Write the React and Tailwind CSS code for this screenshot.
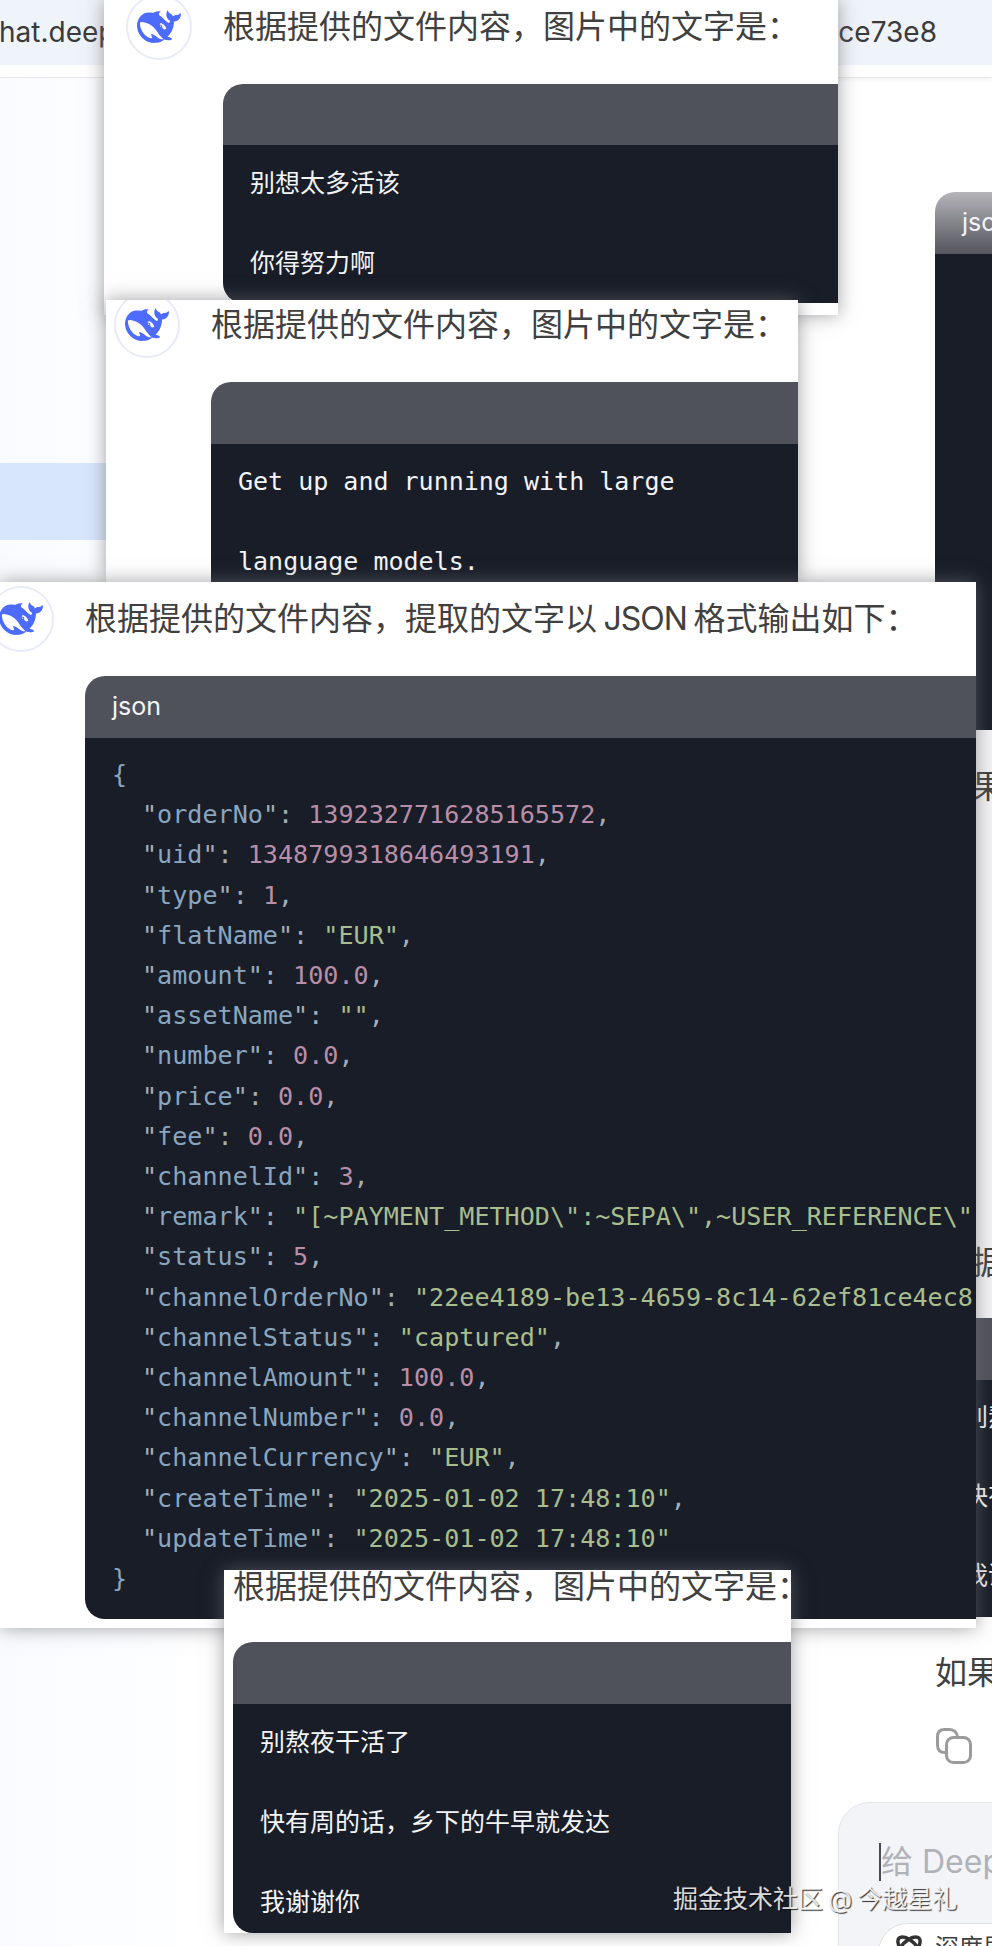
import React from 'react';

const sans = "font-['Inter','Noto_Sans_CJK_SC',sans-serif]";
const mono = "font-['DejaVu_Sans_Mono','Noto_Sans_CJK_SC',monospace]";

const whale =
  'M23.748 4.482c-.254-.124-.364.113-.512.234-.051.039-.094.09-.137.136-.372.397-.806.657-1.373.626-.829-.046-1.537.214-2.163.848-.133-.782-.575-1.248-1.247-1.548-.352-.156-.708-.311-.955-.65-.172-.241-.219-.51-.305-.774-.055-.16-.11-.323-.293-.35-.2-.031-.278.136-.356.276-.313.572-.434 1.202-.422 1.84.027 1.436.633 2.58 1.838 3.393.137.093.172.187.129.323-.082.28-.18.552-.266.833-.055.179-.137.217-.329.14a5.526 5.526 0 01-1.736-1.18c-.857-.828-1.631-1.742-2.597-2.458a11.365 11.365 0 00-.689-.471c-.985-.957.13-1.743.388-1.836.27-.098.093-.432-.779-.428-.872.004-1.67.295-2.687.684a3.055 3.055 0 01-.465.137 9.597 9.597 0 00-2.883-.102c-1.885.21-3.39 1.102-4.497 2.623C.082 8.606-.231 10.684.152 12.85c.403 2.284 1.569 4.175 3.36 5.653 1.858 1.533 3.997 2.284 6.438 2.14 1.482-.085 3.133-.284 4.994-1.86.47.234.962.327 1.78.397.63.059 1.236-.03 1.705-.128.735-.156.684-.837.419-.961-2.155-1.004-1.682-.595-2.113-.926 1.096-1.296 2.746-2.642 3.392-7.003.05-.347.007-.565 0-.845-.004-.17.035-.237.23-.256a4.173 4.173 0 001.545-.475c1.396-.763 1.96-2.015 2.093-3.517.02-.23-.004-.467-.247-.588zM11.581 18c-2.089-1.642-3.102-2.183-3.52-2.16-.392.024-.321.471-.235.763.09.288.207.486.371.739.114.167.192.416-.113.603-.673.416-1.842-.14-1.897-.167-1.361-.802-2.5-1.86-3.301-3.307-.774-1.393-1.224-2.887-1.298-4.482-.02-.386.093-.522.477-.592a4.696 4.696 0 011.529-.039c2.132.312 3.946 1.265 5.468 2.774.868.86 1.525 1.887 2.202 2.891.72 1.066 1.494 2.082 2.48 2.914.348.292.625.514.891.677-.802.09-2.14.11-3.054-.614zm1-6.44a.306.306 0 01.415-.287.302.302 0 01.2.288.306.306 0 01-.31.307.303.303 0 01-.305-.308zm3.11 1.596c-.2.081-.399.151-.59.16a1.245 1.245 0 01-.798-.254c-.274-.23-.47-.358-.552-.758a1.73 1.73 0 01.016-.588c.07-.327-.008-.537-.239-.727-.187-.156-.426-.199-.688-.199a.559.559 0 01-.254-.078c-.11-.054-.2-.19-.114-.358.028-.054.16-.186.192-.21.356-.202.767-.136 1.146.016.352.144.618.408 1.001.782.391.451.462.576.685.914.176.265.336.537.445.848.067.195-.019.354-.25.452z';

const jsonLines = [
  ['orderNo', '1392327716285165572,', 'n'],
  ['uid', '1348799318646493191,', 'n'],
  ['type', '1,', 'n'],
  ['flatName', '"EUR",', 's'],
  ['amount', '100.0,', 'n'],
  ['assetName', '"",', 's'],
  ['number', '0.0,', 'n'],
  ['price', '0.0,', 'n'],
  ['fee', '0.0,', 'n'],
  ['channelId', '3,', 'n'],
  ['remark', '"[~PAYMENT_METHOD\\":~SEPA\\",~USER_REFERENCE\\":~ABC\\"]",', 's'],
  ['status', '5,', 'n'],
  ['channelOrderNo', '"22ee4189-be13-4659-8c14-62ef81ce4ec8",', 's'],
  ['channelStatus', '"captured",', 's'],
  ['channelAmount', '100.0,', 'n'],
  ['channelNumber', '0.0,', 'n'],
  ['channelCurrency', '"EUR",', 's'],
  ['createTime', '"2025-01-02 17:48:10",', 's'],
  ['updateTime', '"2025-01-02 17:48:10"', 's'],
];

function Avatar() {
  return (
    <div className="w-[66px] h-[66px] shrink-0 rounded-full border-2 border-[#e8eafa] bg-white flex items-center justify-center">
      <svg viewBox="0 0 24 24" className="w-[44px] h-[44px]" fill="#4d6bfe">
        <path d={whale} />
      </svg>
    </div>
  );
}

function CodeBlock({ label, children, bodyClass, headerClass = 'h-[62px]' }) {
  return (
    <div className="rounded-l-[20px] overflow-hidden">
      <div className={`bg-[#50525b] flex items-center pl-[27px] text-[25px] text-[#f3f4f6] ${headerClass} ${sans}`}>{label}</div>
      <div className={`bg-[#181d28] ${bodyClass}`}>{children}</div>
    </div>
  );
}

function TextLines({ lines, font }) {
  return (
    <div className={`pt-[18px] pl-[27px] flex flex-col gap-[40px] text-[25px] leading-[40px] text-[#f3f4f6] whitespace-pre ${font}`}>
      {lines.map((l) => (
        <div key={l}>{l}</div>
      ))}
    </div>
  );
}

function JsonBody() {
  return (
    <div className={`pt-[17px] pl-[27px] pb-[20px] text-[25.1px] leading-[40.2px] whitespace-pre ${mono}`}>
      <div className="text-[#8aa6bf]">{'{'}</div>
      {jsonLines.map(([key, value, kind]) => (
        <div key={key} className="pl-[30px]">
          <span className="text-[#a3aeb8]">"</span>
          <span className="text-[#8aa6bf]">{key}</span>
          <span className="text-[#a3aeb8]">": </span>
          <span className={kind === 'n' ? 'text-[#b88ea8]' : 'text-[#a9bd8e]'}>{value.replace(/,$/, '')}</span>
          {value.endsWith(',') && <span className="text-[#a3aeb8]">,</span>}
        </div>
      ))}
      <div className="text-[#8aa6bf]">{'}'}</div>
    </div>
  );
}

function Heading({ children }) {
  return (
    <div className={`mt-[9px] h-[81px] text-[32px] leading-[48px] text-[#404040] whitespace-nowrap ${sans}`}>{children}</div>
  );
}

function Message({ text, children, offset }) {
  return (
    <div className={`flex items-start gap-[31px] ${offset}`}>
      <Avatar />
      <div className="flex-1 min-w-0">
        <Heading>{text}</Heading>
        {children}
      </div>
    </div>
  );
}

const cardShadow = 'shadow-[0_0_18px_rgba(110,110,115,0.65)]';

export default function App() {
  return (
    <div className={`relative w-[992px] h-[1946px] overflow-hidden bg-white ${sans}`}>
      {/* page behind the pasted screenshots */}
      <div className="h-[65px] bg-[#eff3fa] flex items-center justify-between pr-[55px] pb-[2px] text-[28px] text-[#3a3a3a]">
        <span className="-ml-[1px]">hat.deep</span>
        <span>ce73e8</span>
      </div>
      <div className="h-[13px] bg-white border-b border-[#e8e8e8] shadow-[0_2px_4px_rgba(0,0,0,0.05)]" />

      <div className="flex h-[1868px]">
        <aside className="w-[210px] bg-gradient-to-r from-[#f9fbff] to-white pt-[385px]">
          <div className="h-[77px] bg-[#d7e6fb]" />
        </aside>
        <div className="flex-1" />
        <div className="w-[154px] shrink-0 overflow-hidden">
          <div className="ml-[97px] pt-[114px] w-[200px]">
            <div className="rounded-tl-[20px] overflow-hidden">
              <div className="h-[62px] bg-gradient-to-b from-[#b5b5ba] to-[#55565d] pl-[27px] flex items-center text-[25px] text-[#f3f4f6]">json</div>
              <div className="h-[476px] bg-[#181d28]" />
            </div>
            <div className="h-[588px] pt-[33px] pl-[5px] bg-[#f4f4f6] text-[32px] leading-[48px] text-[#404040] whitespace-nowrap">
              <div>结果</div>
              <div className="mt-[428px]">数据</div>
            </div>
            <div className="h-[62px] bg-[#50525b]" />
            <div className="h-[237px] bg-[#181d28] pt-[17px] pl-[28px] text-[25px] leading-[40px] text-[#f3f4f6] whitespace-nowrap flex flex-col gap-[39px]">
              <div>别熬夜干活了</div>
              <div>快有周的话</div>
              <div>我谢谢你</div>
            </div>
            <div className="mt-[32px] text-[32px] leading-[48px] text-[#404040] whitespace-nowrap">如果</div>
            <svg viewBox="0 0 36 36" fill="none" stroke="#9b9b9b" strokeWidth="3" className="mt-[31px] ml-[1px] w-[36px] h-[36px]">
              <rect x="10.5" y="9.5" width="24" height="25" rx="7" />
              <path d="M9 24.5C4 24.5 1.5 22 1.5 17V8.5C1.5 4 4 1.5 8.5 1.5H13C17.5 1.5 20.5 4 21.5 8" />
            </svg>
          </div>
          <div className="mt-[38px] h-[200px] w-[260px] rounded-tl-[32px] border border-[#e3e5e9] bg-[#f3f4f8] pt-[40px] pl-[40px]">
            <div className="h-[38px] border-l-2 border-[#4a4a52] text-[32px] leading-[38px] text-[#b0b2b8] whitespace-nowrap">给 Deep</div>
            <div className="mt-[42px] -ml-[1px] h-[60px] w-[170px] rounded-[30px] border border-[#e0e1e5] bg-white flex items-start gap-[10px] pl-[14px] pt-[8px]">
              <svg viewBox="0 0 32 32" fill="none" stroke="#333" strokeWidth="3.5" className="w-[32px] h-[32px]">
                <ellipse cx="16" cy="16" rx="14" ry="7" transform="rotate(45 16 16)" />
                <ellipse cx="16" cy="16" rx="14" ry="7" transform="rotate(-45 16 16)" />
              </svg>
              <span className="text-[24px] leading-[32px] text-[#404040] whitespace-nowrap">深度思考</span>
            </div>
          </div>
        </div>
      </div>

      {/* pasted screenshots, stacked like windows */}
      <section className={`absolute left-[104px] top-0 w-[734px] h-[315px] overflow-hidden bg-white ${cardShadow}`}>
        <Message text="根据提供的文件内容，图片中的文字是：" offset="ml-[22px] -mt-[6px]">
          <CodeBlock headerClass="h-[61px]" bodyClass="h-[158px]">
            <TextLines lines={['别想太多活该', '你得努力啊']} font={sans} />
          </CodeBlock>
        </Message>
      </section>

      <section className={`absolute left-[106px] top-[300px] w-[692px] h-[282px] overflow-hidden bg-white ${cardShadow}`}>
        <Message text="根据提供的文件内容，图片中的文字是：" offset="ml-[8px] -mt-[8px]">
          <CodeBlock bodyClass="h-[220px]">
            <TextLines lines={['Get up and running with large', 'language models.']} font={mono} />
          </CodeBlock>
        </Message>
      </section>

      <section className={`absolute left-0 top-[582px] w-[976px] h-[1046px] overflow-hidden bg-white ${cardShadow}`}>
        <Message
          text={
            <span className="[word-spacing:-2.5px]">
              根据提供的文件内容，提取的文字以 <span className="tracking-[-1px]">JSON</span> 格式输出如下：
            </span>
          }
          offset="-ml-[12px] mt-[4px]"
        >
          <CodeBlock label="json" bodyClass="">
            <JsonBody />
          </CodeBlock>
        </Message>
      </section>

      <section className={`absolute left-[224px] top-[1570px] w-[567px] h-[363px] overflow-hidden bg-white ${cardShadow}`}>
        <div className="ml-[9px] -mt-[16px]">
          <Heading>根据提供的文件内容，图片中的文字是：</Heading>
          <div className="-mt-[2px]">
            <CodeBlock bodyClass="h-[229px]">
              <TextLines lines={['别熬夜干活了', '快有周的话，乡下的牛早就发达', '我谢谢你']} font={sans} />
            </CodeBlock>
          </div>
        </div>
      </section>

      <div className="absolute left-[673px] top-[1881px] text-[25px] leading-[36px] text-white/85 whitespace-nowrap [word-spacing:-2px] [text-shadow:1px_1px_1px_rgba(0,0,0,0.8)]">
        掘金技术社区 @ 今越星礼
      </div>
    </div>
  );
}
